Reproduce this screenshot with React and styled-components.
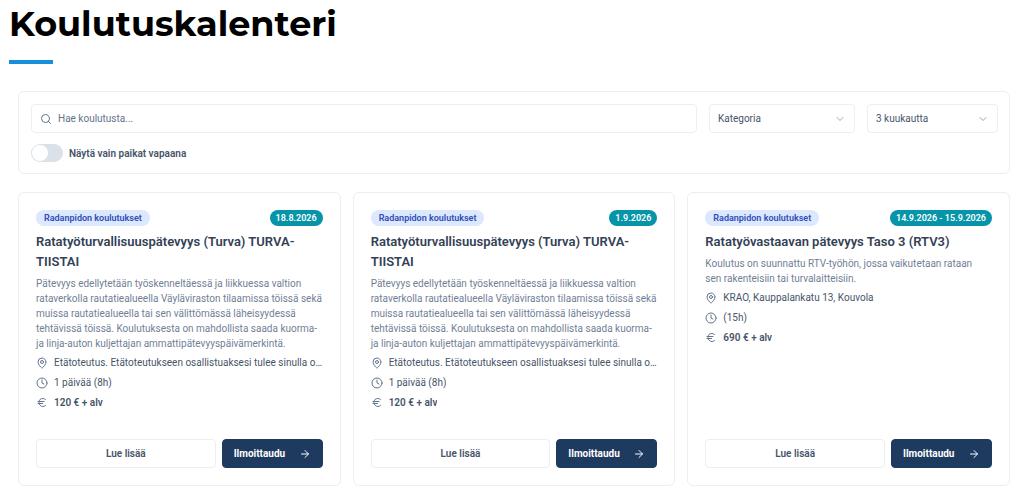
import React, { useState } from "react";
import styled, { createGlobalStyle } from "styled-components";
import { ArrowRight, ChevronDown, Clock, Euro, MapPin, Search } from "lucide-react";

const turvaDescription =
  "Pätevyys edellytetään työskenneltäessä ja liikkuessa valtion rataverkolla rautatiealueella Väyläviraston tilaamissa töissä sekä muissa rautatiealueella tai sen välittömässä läheisyydessä tehtävissä töissä. Koulutuksesta on mahdollista saada kuorma- ja linja-auton kuljettajan ammattipätevyyspäivämerkintä.";

const courses = [
  {
    id: 1,
    category: "Radanpidon koulutukset",
    date: "18.8.2026",
    title: "Ratatyöturvallisuuspätevyys (Turva) TURVA-TIISTAI",
    description: turvaDescription,
    location: "Etätoteutus. Etätoteutukseen osallistuaksesi tulee sinulla o...",
    duration: "1 päivää (8h)",
    price: "120 € + alv",
  },
  {
    id: 2,
    category: "Radanpidon koulutukset",
    date: "1.9.2026",
    title: "Ratatyöturvallisuuspätevyys (Turva) TURVA-TIISTAI",
    description: turvaDescription,
    location: "Etätoteutus. Etätoteutukseen osallistuaksesi tulee sinulla o...",
    duration: "1 päivää (8h)",
    price: "120 € + alv",
  },
  {
    id: 3,
    category: "Radanpidon koulutukset",
    date: "14.9.2026 - 15.9.2026",
    title: "Ratatyövastaavan pätevyys Taso 3 (RTV3)",
    description:
      "Koulutus on suunnattu RTV-työhön, jossa vaikutetaan rataan sen\u00a0rakenteisiin tai turvalaitteisiin.",
    location: "KRAO, Kauppalankatu 13, Kouvola",
    duration: "(15h)",
    price: "690 € + alv",
  },
];

function CourseCard({ course }) {
  return (
    <Card>
      <CardTop>
        <CategoryBadge>{course.category}</CategoryBadge>
        <DateBadge>{course.date}</DateBadge>
      </CardTop>
      <CardTitle>{course.title}</CardTitle>
      <Description>{course.description}</Description>
      <Details>
        <Detail>
          <MapPin size={12} />
          <span>{course.location}</span>
        </Detail>
        <Detail>
          <Clock size={12} />
          <span>{course.duration}</span>
        </Detail>
        <Detail $bold>
          {/* shifted by one unit so both bars land on whole pixels */}
          <Euro size={12} viewBox="0 1 24 24" />
          <span>{course.price}</span>
        </Detail>
      </Details>
      <Actions>
        <Button type="button" $grow>Lue lisää</Button>
        <Button type="button" $primary>
          Ilmoittaudu
          <ArrowRight size={12} />
        </Button>
      </Actions>
    </Card>
  );
}

function App() {
  const [search, setSearch] = useState("");
  const [category, setCategory] = useState("");
  const [period, setPeriod] = useState("3");
  const [onlyFree, setOnlyFree] = useState(false);

  return (
    <>
      <GlobalStyle />
      <Page>
        <Heading>Koulutuskalenteri</Heading>
        <Content>
          <Filters>
            <FilterRow>
              <SearchBox>
                <Search size={12} />
                <input
                  type="text"
                  aria-label="Hae koulutusta"
                  placeholder="Hae koulutusta..."
                  value={search}
                  onChange={(e) => setSearch(e.target.value)}
                />
              </SearchBox>
              <SelectBox $width={146}>
                <select aria-label="Kategoria" value={category} onChange={(e) => setCategory(e.target.value)}>
                  <option value="">Kategoria</option>
                  <option value="rata">Radanpidon koulutukset</option>
                </select>
                <ChevronDown size={12} />
              </SelectBox>
              <SelectBox $width={131}>
                <select aria-label="Ajanjakso" value={period} onChange={(e) => setPeriod(e.target.value)}>
                  <option value="3">3 kuukautta</option>
                  <option value="6">6 kuukautta</option>
                </select>
                <ChevronDown size={12} />
              </SelectBox>
            </FilterRow>
            <SwitchLabel>
              <Switch checked={onlyFree} onChange={(e) => setOnlyFree(e.target.checked)} />
              Näytä vain paikat vapaana
            </SwitchLabel>
          </Filters>
          <Grid>
            {courses.map((course) => (
              <CourseCard key={course.id} course={course} />
            ))}
          </Grid>
        </Content>
      </Page>
    </>
  );
}

const GlobalStyle = createGlobalStyle`
  *, *::before, *::after {
    box-sizing: border-box;
  }
  body {
    margin: 0;
    background: #fff;
    color: #475569;
    font-family: "Segoe UI", Roboto, sans-serif;
    font-size: 10px;
  }
  button, input, select {
    font: inherit;
    color: inherit;
  }
  h1, h2, p {
    margin: 0;
  }
`;

const Page = styled.main`
  padding: 0 14px 6px 9px;
`;

const Heading = styled.h1`
  font-family: Montserrat, Inter, sans-serif;
  font-size: 35px;
  font-weight: 700;
  line-height: 48px;
  color: #000;

  &::after {
    content: "";
    display: block;
    width: 44px;
    height: 4px;
    margin-top: 12px;
    background: #178fd9;
  }
`;

const Content = styled.div`
  display: flex;
  flex-direction: column;
  gap: 18px;
  padding: 27px 0 0 9px;
`;

const Filters = styled.section`
  padding: 12px 11px 11px 12px;
  border: 1px solid #eceef1;
  border-radius: 6px;
`;

const FilterRow = styled.div`
  display: flex;
  gap: 12px;
`;

const SearchBox = styled.label`
  display: flex;
  flex: 1;
  align-items: center;
  gap: 6px;
  height: 29px;
  padding: 0 8px;
  border: 1px solid #eceef1;
  border-radius: 4px;
  color: #64748b;

  input {
    flex: 1;
    min-width: 0;
    padding: 0;
    border: 0;
    outline: none;
    background: none;
  }
  input::placeholder {
    color: #64748b;
    opacity: 1;
  }
`;

const SelectBox = styled.div`
  display: grid;
  grid-template-columns: minmax(0, 1fr);
  align-items: center;
  width: ${({ $width }) => $width}px;
  height: 29px;
  border: 1px solid #eceef1;
  border-radius: 4px;

  select,
  svg {
    grid-area: 1 / 1;
  }
  select {
    height: 100%;
    padding: 0 28px 0 8px;
    border: 0;
    outline: none;
    appearance: none;
    background: none;
  }
  svg {
    justify-self: end;
    margin-right: 8px;
    color: #94a3b8;
    pointer-events: none;
  }
`;

const SwitchLabel = styled.label`
  display: flex;
  align-items: center;
  gap: 6px;
  width: fit-content;
  margin-top: 11px;
  font-weight: 600;
  color: #475569;
`;

const Switch = styled.input.attrs({ type: "checkbox", role: "switch" })`
  display: flex;
  align-items: center;
  width: 32px;
  height: 18px;
  margin: 0;
  padding: 1px;
  border-radius: 9px;
  appearance: none;
  background: #dae1e9;

  &::before {
    content: "";
    width: 16px;
    height: 16px;
    border-radius: 50%;
    background: #fff;
  }
  &:checked {
    justify-content: flex-end;
    background: #1e3a5f;
  }
`;

const Grid = styled.div`
  display: grid;
  grid-template-columns: repeat(3, minmax(0, 1fr));
  gap: 12px;
`;

const Card = styled.article`
  display: flex;
  flex-direction: column;
  padding: 17px;
  border: 1px solid #eceef1;
  border-radius: 6px;
`;

const CardTop = styled.div`
  display: flex;
  align-items: center;
  justify-content: space-between;
  height: 16px;
`;

const Badge = styled.span`
  padding: 0 8px;
  border-radius: 8px;
  font-size: 9px;
  font-weight: 600;
  line-height: 16px;
`;

const CategoryBadge = styled(Badge)`
  background: #dbe8fe;
  color: #2f4cb8;
`;

const DateBadge = styled(Badge)`
  padding: 0 6px;
  background: #0694a8;
  color: #fff;
`;

const CardTitle = styled.h2`
  margin-top: 6px;
  font-size: 13px;
  font-weight: 600;
  line-height: 20px;
  color: #334155;
`;

const Description = styled.p`
  margin-top: 4px;
  line-height: 15px;
  color: #718096;
`;

const Details = styled.div`
  display: flex;
  flex-direction: column;
  gap: 5px;
  margin: 4px 0 29px;
`;

const Detail = styled.div`
  display: flex;
  align-items: center;
  gap: 6px;
  line-height: 15px;
  font-weight: ${({ $bold }) => ($bold ? 600 : 400)};
  color: #475569;

  svg {
    flex-shrink: 0;
    color: #64748b;
  }
  span {
    overflow: hidden;
    text-overflow: ellipsis;
    white-space: nowrap;
  }
`;

const Actions = styled.div`
  display: flex;
  gap: 6px;
  margin-top: auto;
`;

const Button = styled.button`
  display: flex;
  flex: ${({ $grow }) => ($grow ? "1" : "0 0 101px")};
  align-items: center;
  justify-content: ${({ $primary }) => ($primary ? "space-between" : "center")};
  height: 29px;
  padding: 0 11px;
  border: 1px solid ${({ $primary }) => ($primary ? "#1e3a5f" : "#eceef1")};
  border-radius: 4px;
  background: ${({ $primary }) => ($primary ? "#1e3a5f" : "#fff")};
  color: ${({ $primary }) => ($primary ? "#fff" : "#475569")};
  font-weight: ${({ $primary }) => ($primary ? 700 : 600)};
  cursor: pointer;
`;

export default App;
